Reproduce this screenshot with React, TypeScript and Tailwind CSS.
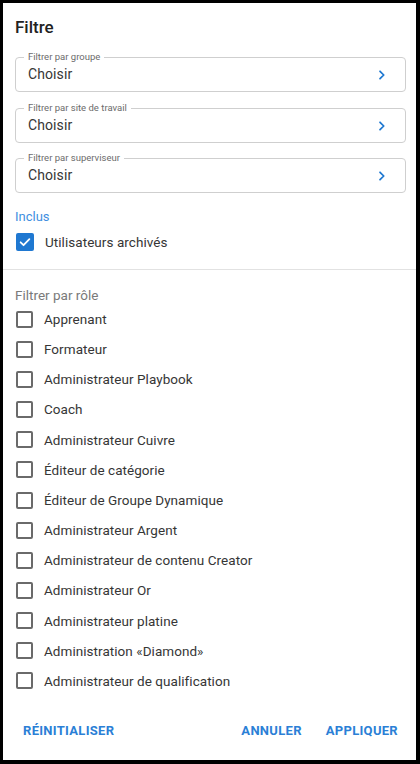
import React from "react";

const roles = [
  "Apprenant",
  "Formateur",
  "Administrateur Playbook",
  "Coach",
  "Administrateur Cuivre",
  "Éditeur de catégorie",
  "Éditeur de Groupe Dynamique",
  "Administrateur Argent",
  "Administrateur de contenu Creator",
  "Administrateur Or",
  "Administrateur platine",
  "Administration «Diamond»",
  "Administrateur de qualification",
];

function Chevron() {
  return (
    <svg width="14" height="14" viewBox="0 0 24 24" fill="none">
      <path d="M8.6 5.6 15 12l-6.4 6.4" stroke="#1f78d1" strokeWidth="3" strokeLinecap="round" strokeLinejoin="round" />
    </svg>
  );
}

function Field({ label }: { label: string }) {
  return (
    <div className="relative h-[35px] rounded-[4px] border border-[#cfcfcf] flex items-center pl-[12px] pr-[16px]">
      <span className="absolute -top-[8px] left-[8px] bg-white px-[4px] text-[9.5px] leading-[14px] text-[#6b6b6b]">{label}</span>
      <span className="flex-1 text-[14px] tracking-[0.1px] text-[#363636]">Choisir</span>
      <Chevron />
    </div>
  );
}

function Box({ checked }: { checked?: boolean }) {
  if (checked) {
    return (
      <div className="w-[18px] h-[18px] rounded-[2px] bg-[#1f78d1] flex items-center justify-center">
        <svg width="14" height="14" viewBox="0 0 24 24" fill="none">
          <path d="M4.5 12.5l5 5L19.5 7" stroke="white" strokeWidth="3" strokeLinecap="round" strokeLinejoin="round" />
        </svg>
      </div>
    );
  }
  return <div className="w-[17px] h-[17px] rounded-[2px] border-2 border-[#6a6a6a]" />;
}

export default function App() {
  return (
    <div className="w-[420px] h-[764px] bg-black pl-[3px] pt-[3px] pr-[4px] pb-[4px]" style={{ fontFamily: "Roboto, 'Liberation Sans', sans-serif" }}>
      <div className="w-full h-full bg-white flex flex-col">
        <div className="pl-[12px] pr-[10px]">
          <div className="pt-[14px] h-[45px] text-[17px] font-medium text-[#222] leading-[20px]">Filtre</div>
          <div className="mt-[9px] flex flex-col">
            <Field label="Filtrer par groupe" />
            <div className="h-[16px]" />
            <Field label="Filtrer par site de travail" />
            <div className="h-[15px]" />
            <Field label="Filtrer par superviseur" />
          </div>
          <div className="mt-[16px] text-[13px] leading-[16px] text-[#3f8fdf]">Inclus</div>
          <div className="mt-[8px] h-[18px] flex items-center pl-[1px]">
            <Box checked />
            <span className="ml-[11px] text-[13.5px] tracking-[0.05px] text-[#363636]">Utilisateurs archivés</span>
          </div>
        </div>
        <div className="mt-[18px] h-px bg-[#e2e2e2]" />
        <div className="pl-[12px] pr-[10px]">
          <div className="mt-[17px] text-[13.5px] leading-[16px] text-[#7a7a7a]">Filtrer par rôle</div>
          <div className="mt-[1px] flex flex-col">
            {roles.map((r) => (
              <div key={r} className="h-[30.17px] flex items-center pl-[1px]">
                <Box />
                <span className="ml-[11px] text-[13.5px] tracking-[0.05px] text-[#363636]">{r}</span>
              </div>
            ))}
          </div>
        </div>
        <div className="mt-[25px] flex items-center pl-[20px] pr-[18px] text-[13px] font-bold tracking-[0.3px] text-[#2b7fd6]">
          <span>RÉINITIALISER</span>
          <span className="ml-auto">ANNULER</span>
          <span className="ml-[24px]">APPLIQUER</span>
        </div>
      </div>
    </div>
  );
}
